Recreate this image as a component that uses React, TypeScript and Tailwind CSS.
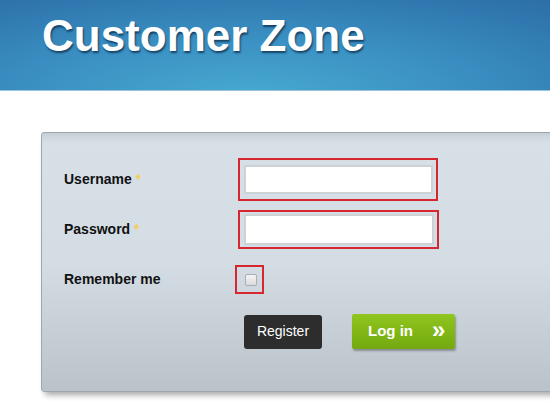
export default function App() {
  return (
    <div className="w-[550px] h-[408px] overflow-hidden bg-white font-['Liberation_Sans',Arial,sans-serif]">
      {/* Header */}
      <div className="h-[91px] border-b border-[#9cc4dc] bg-[radial-gradient(ellipse_110%_170%_at_45%_105%,#47a9d0_0%,#3b91c3_35%,#3079b0_65%,#27629a_100%)] pl-[42px] pt-[10px]">
        <h1 className="text-[44px] font-bold leading-[52px] text-white [text-shadow:1px_2px_2px_rgba(10,40,70,0.75)]">
          Customer Zone
        </h1>
      </div>

      {/* Login panel */}
      <div className="pt-[41px] pl-[41px]">
        <div className="w-[560px] rounded-[3px] border border-[#9fa7ad] bg-gradient-to-b from-[#d7e0e7] via-[#d4dde4] to-[#bbc3ca] pl-[22px] pt-[25px] pb-[42px] shadow-[inset_0_10px_10px_-8px_rgba(0,0,0,0.12),0_7px_6px_-4px_rgba(0,0,0,0.35)]">
          <div className="flex items-center">
            <label className="w-[174px] text-[14px] font-bold text-[#111]">
              Username <span className="text-[#f2cf5b]">*</span>
            </label>
            <div className="w-[200px] border-2 border-[#d7262f] pl-[4px] pr-[3px] py-[5px]">
              <input type="text" className="block h-[29px] w-full border-2 border-[#cdd2d6] bg-white outline-none" />
            </div>
          </div>

          <div className="mt-[9px] flex items-center">
            <label className="w-[174px] text-[14px] font-bold text-[#111]">
              Password <span className="text-[#f2cf5b]">*</span>
            </label>
            <div className="w-[201px] border-2 border-[#d7262f] pl-[4px] pr-[3px] py-[2px]">
              <input type="password" className="block h-[31px] w-full border-2 border-[#cdd2d6] bg-white outline-none" />
            </div>
          </div>

          <div className="mt-[16px] flex items-center">
            <label className="w-[171px] text-[14px] font-bold text-[#111]">Remember me</label>
            <div className="flex h-[29px] w-[29px] items-center justify-center border-2 border-[#d7262f] pl-[2px]">
              <span className="block h-[12px] w-[12px] rounded-[2px] border border-[#a9adb1] bg-gradient-to-b from-[#f4f4f4] to-[#dcdcdc]" />
            </div>
          </div>

          <div className="mt-[20px] flex items-center pl-[180px]">
            <button className="h-[34px] w-[78px] rounded-[3px] bg-[#2d2d2d] text-[14px] text-white">Register</button>
            <button className="ml-[30px] flex h-[35px] w-[103px] items-center rounded-[2px] bg-gradient-to-b from-[#8fc61e] to-[#73a90f] pl-[16px] text-[15px] font-bold text-white shadow-[1px_2px_2px_rgba(0,0,0,0.3)]">
              <span>Log in</span>
              <span className="ml-[19px] -mt-[3px] text-[24px] font-bold leading-[24px]">»</span>
            </button>
          </div>
        </div>
      </div>
    </div>
  )
}
